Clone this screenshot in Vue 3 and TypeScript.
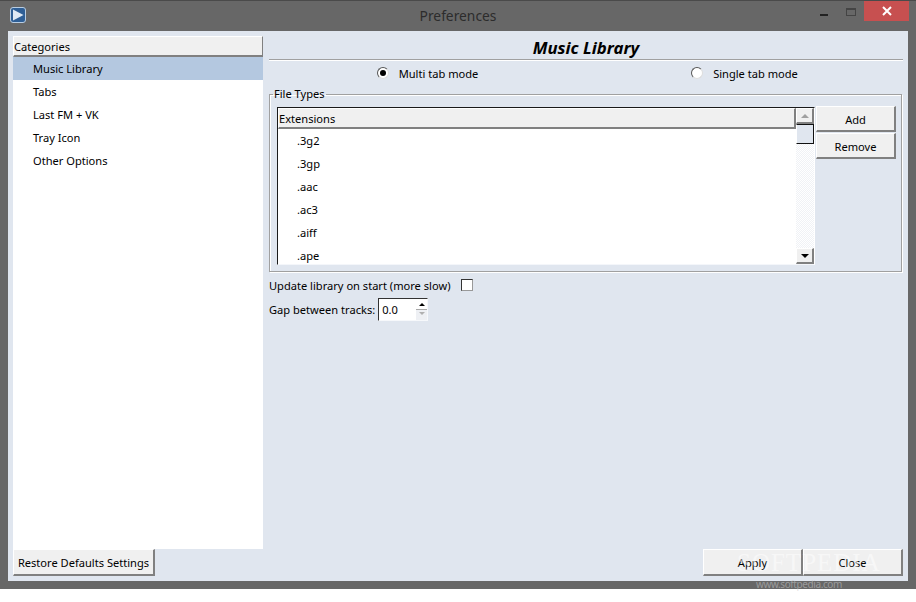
<script setup lang="ts">
const categories = ['Music Library', 'Tabs', 'Last FM + VK', 'Tray Icon', 'Other Options']
const extensions = ['.3g2', '.3gp', '.aac', '.ac3', '.aiff', '.ape']
</script>

<template>
  <div class="page">
    <div class="window">
      <header class="titlebar">
        <div class="titlebar__left">
          <svg class="app-icon" width="16" height="16" viewBox="0 0 16 16">
            <rect x="0.5" y="0.5" width="15" height="15" rx="2.5" fill="#2f5f96" stroke="#b9cde2" />
            <path d="M3 2.5 L13.5 8 L3 13.5 Z" fill="#dfe9f4" />
          </svg>
        </div>
        <div class="titlebar__title">Preferences</div>
        <div class="titlebar__controls">
          <span class="ctl-min"></span>
          <span class="ctl-max"></span>
          <span class="ctl-close">
            <svg width="10" height="10" viewBox="0 0 10 10">
              <path d="M1 1 L9 9 M9 1 L1 9" stroke="#fff" stroke-width="2" />
            </svg>
          </span>
        </div>
      </header>

      <div class="client">
        <div class="main">
          <aside class="categories">
            <div class="categories__head">Categories</div>
            <ul class="categories__list">
              <li
                v-for="(item, i) in categories"
                :key="item"
                class="categories__item"
                :class="{ 'is-active': i === 0 }"
              >
                {{ item }}
              </li>
            </ul>
          </aside>

          <section class="panel">
            <h1 class="panel__title">Music Library</h1>

            <div class="modes">
              <label class="mode">
                <span class="radio is-checked"></span>
                Multi tab mode
              </label>
              <label class="mode">
                <span class="radio"></span>
                Single tab mode
              </label>
            </div>

            <fieldset class="group">
              <legend class="group__legend">File Types</legend>
              <div class="table">
                <div class="table__body">
                  <div class="table__head">Extensions</div>
                  <div v-for="ext in extensions" :key="ext" class="table__row">{{ ext }}</div>
                </div>
                <div class="scroll">
                  <span class="scroll__btn"><i class="arrow arrow--up arrow--dim"></i></span>
                  <span class="scroll__thumb"></span>
                  <span class="scroll__track"></span>
                  <span class="scroll__btn"><i class="arrow arrow--down"></i></span>
                </div>
              </div>
              <div class="group__actions">
                <button class="btn btn--side">Add</button>
                <button class="btn btn--side">Remove</button>
              </div>
            </fieldset>

            <div class="option option--update">
              Update library on start (more slow)
              <span class="check"></span>
            </div>
            <div class="option option--gap">
              Gap between tracks:
              <span class="spin">
                <span class="spin__value">0.0</span>
                <span class="spin__arrows">
                  <i class="arrow arrow--small-up"></i>
                  <i class="arrow arrow--small-down"></i>
                </span>
              </span>
            </div>
          </section>
        </div>

        <footer class="footer">
          <button class="btn btn--restore">Restore Defaults Settings</button>
          <div class="footer__right">
            <button class="btn btn--wide">Apply</button>
            <button class="btn btn--wide">Close</button>
          </div>
        </footer>
      </div>

      <div class="mark">SOFTPEDIA</div>
      <div class="mark-url">www.softpedia.com</div>
    </div>
  </div>
</template>

<style>
html,
body {
  margin: 0;
  background: #fff;
}
</style>

<style scoped>
.page {
  width: 916px;
  height: 602px;
  background: #fff;
  overflow: hidden;
  font-family: "Noto Sans", "DejaVu Sans", sans-serif;
  font-size: 11.1px;
  color: #000;
}

.window {
  position: relative;
  width: 916px;
  height: 589px;
  box-sizing: border-box;
  padding: 0 8px 8px;
  background: #676767;
  border-top: 1px solid #4a4a4a;
  display: flex;
  flex-direction: column;
}

.titlebar {
  height: 30px;
  margin: 0 -8px;
  display: grid;
  grid-template-columns: 1fr auto 1fr;
  align-items: start;
}

.titlebar__left {
  padding: 6px 0 0 10px;
}

.app-icon {
  display: block;
}

.titlebar__title {
  padding-top: 5px;
  font-size: 13.8px;
  line-height: 19px;
  color: #2c2c2c;
}

.titlebar__controls {
  display: flex;
  justify-content: flex-end;
  padding-right: 7px;
}

.ctl-min {
  width: 8px;
  height: 2px;
  margin: 13px 18px 0 0;
  background: #222;
}

.ctl-max {
  width: 8px;
  height: 5px;
  margin: 7px 8px 0 0;
  border: 1px solid #444;
  border-top-width: 2px;
}

.ctl-close {
  width: 45px;
  height: 20px;
  background: #c75050;
  display: flex;
  align-items: center;
  justify-content: center;
}

.client {
  flex: 1;
  min-height: 0;
  box-sizing: border-box;
  padding: 5px;
  background: #e0e6ef;
  display: flex;
  flex-direction: column;
}

.main {
  flex: 1;
  min-height: 0;
  display: flex;
  gap: 6px;
}

.categories {
  width: 250px;
  display: flex;
  flex-direction: column;
}

.categories__head {
  height: 21px;
  box-sizing: border-box;
  line-height: 20px;
  background: #f0f0f0;
  border: 1px solid #fff;
  border-right: 1px solid #808080;
  border-bottom: 2px solid #808080;
}

.categories__list {
  flex: 1;
  margin: 0;
  padding: 0;
  list-style: none;
  background: #fff;
}

.categories__item {
  height: 23px;
  line-height: 24px;
  padding-left: 20px;
}

.categories__item.is-active {
  background: #b4c8e0;
}

.panel {
  flex: 1;
  min-width: 0;
}

.panel__title {
  margin: 0;
  height: 24px;
  box-sizing: border-box;
  border-bottom: 1px solid #a0a0a0;
  box-shadow: 0 1px 0 #fff;
  text-align: center;
  font-size: 16.8px;
  font-style: italic;
  font-weight: 700;
  line-height: 24px;
}

.modes {
  display: flex;
  height: 27px;
  padding-top: 1px;
  box-sizing: border-box;
}

.mode {
  flex: 1;
  display: flex;
  align-items: flex-start;
  justify-content: center;
  line-height: 26px;
  gap: 10px;
}

.radio {
  width: 12px;
  height: 12px;
  margin-top: 6px;
  box-sizing: border-box;
  border-radius: 50%;
  background: #fff;
  border: 1px solid #555;
  border-right-color: #ddd;
  border-bottom-color: #ddd;
  position: relative;
}

.radio.is-checked::after {
  content: "";
  position: absolute;
  left: 2px;
  top: 2px;
  width: 6px;
  height: 6px;
  border-radius: 50%;
  background: #000;
}

.group {
  display: flex;
  align-items: flex-start;
  margin: 0 1px 0 0;
  padding: 6px 5px 6px 7px;
  min-width: 0;
  border: 1px solid #a0a0a0;
  box-shadow: inset 1px 1px 0 #fff, 1px 1px 0 #fff;
}

.group__legend {
  margin-left: -4px;
  padding: 0 1px;
  height: 14px;
  line-height: 14px;
}

.table {
  width: 538px;
  height: 158px;
  box-sizing: border-box;
  display: flex;
  overflow: hidden;
  background: #fff;
  border-top: 1px solid #1a1a1a;
  border-left: 1px solid #1a1a1a;
  border-right: 1px solid #fff;
  border-bottom: 1px solid #f4f6fa;
}

.table__body {
  flex: 1;
  min-width: 0;
  overflow: hidden;
}

.table__head {
  height: 21px;
  box-sizing: border-box;
  line-height: 20px;
  background: #f0f0f0;
  border-top: 1px solid #fff;
  border-left: 1px solid #fff;
  border-right: 2px solid #808080;
  border-bottom: 2px solid #808080;
}

.table__row {
  height: 23px;
  line-height: 24px;
  padding-left: 19px;
}

.scroll {
  width: 18px;
  flex: none;
  display: flex;
  flex-direction: column;
  background: #e0e6ef;
}

.scroll__btn {
  height: 16px;
  flex: none;
  box-sizing: border-box;
  display: flex;
  align-items: center;
  justify-content: center;
  background: #f0f0f0;
  border: 1px solid #fff;
  border-right: 2px solid #808080;
  border-bottom: 2px solid #808080;
}

.scroll__thumb {
  height: 20px;
  flex: none;
  box-sizing: border-box;
  background: #e0e6ef;
  border: 1px solid #fff;
  border-right: 1px solid #111;
  border-bottom: 1px solid #111;
  border-top: 1px solid #111;
}

.scroll__track {
  flex: 1;
  background: repeating-conic-gradient(#f0f2f6 0 25%, #fff 0 50%) 0 0 / 2px 2px;
}

.arrow {
  display: block;
  width: 0;
  height: 0;
  border-left: 4px solid transparent;
  border-right: 4px solid transparent;
}

.arrow--up {
  border-bottom: 4px solid #000;
}

.arrow--dim {
  border-bottom-color: #a0a0a0;
}

.arrow--down {
  border-top: 4px solid #000;
}

.group__actions {
  display: flex;
  flex-direction: column;
  gap: 1px;
  margin: -1px 0 0 1px;
}

.btn {
  display: block;
  margin: 0;
  padding: 0;
  box-sizing: border-box;
  font: inherit;
  color: inherit;
  text-align: center;
  white-space: nowrap;
  background: #f0f0f0;
  border: 1px solid #fff;
  border-right: 2px solid #808080;
  border-bottom: 2px solid #808080;
  border-radius: 0;
}

.btn--side {
  width: 80px;
  height: 26px;
  padding-top: 2px;
}

.option {
  display: flex;
  align-items: center;
}

.option--update {
  height: 26px;
  gap: 11px;
}

.check {
  width: 12px;
  height: 12px;
  box-sizing: border-box;
  background: #fff;
  border: 1px solid #333;
  border-right-color: #999;
  border-bottom-color: #999;
}

.option--gap {
  height: 24px;
  margin-top: -1px;
  gap: 3px;
}

.spin {
  width: 50px;
  height: 23px;
  box-sizing: border-box;
  display: flex;
  background: #fff;
  border-left: 1px solid #333;
  border-top: 1px solid #333;
  border-right: 1px solid #f6f8fb;
  border-bottom: 1px solid #f6f8fb;
}

.spin__value {
  flex: 1;
  padding-left: 3px;
  line-height: 22px;
}

.spin__arrows {
  width: 11px;
  display: flex;
  flex-direction: column;
  align-items: center;
  justify-content: space-around;
  padding: 2px 0;
  background: linear-gradient(#fff 46%, #a8a8a8 46%, #a8a8a8 54%, #eef0f4 54%);
}

.arrow--small-up {
  border-left-width: 3px;
  border-right-width: 3px;
  border-bottom: 3px solid #000;
}

.arrow--small-down {
  border-left-width: 3px;
  border-right-width: 3px;
  border-top: 3px solid #b0b0b0;
}

.footer {
  flex: none;
  height: 27px;
  display: flex;
  justify-content: space-between;
}

.footer__right {
  display: flex;
}

.btn--restore {
  width: 142px;
  height: 27px;
}

.btn--wide {
  width: 100px;
  height: 27px;
}

.mark {
  position: absolute;
  left: 737px;
  top: 548px;
  font-family: "Liberation Serif", serif;
  font-size: 25px;
  letter-spacing: 1px;
  line-height: 28px;
  color: rgba(255, 255, 255, 0.5);
  pointer-events: none;
}

.mark-url {
  position: absolute;
  left: 756px;
  top: 576px;
  font-size: 10px;
  letter-spacing: -0.4px;
  line-height: 14px;
  color: rgba(200, 200, 200, 0.55);
  pointer-events: none;
}
</style>
